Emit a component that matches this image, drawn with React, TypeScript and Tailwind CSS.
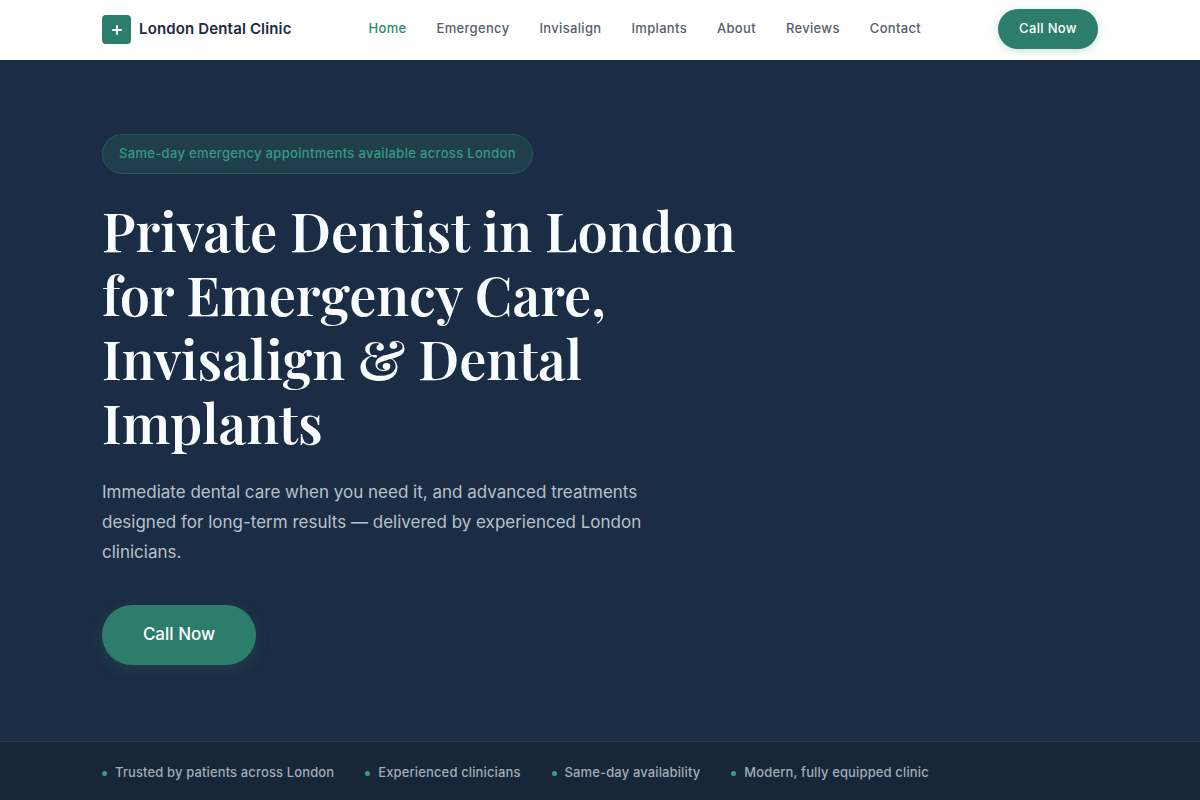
import clsx from 'clsx'

const navItems = ['Home', 'Emergency', 'Invisalign', 'Implants', 'About', 'Reviews', 'Contact']

const trustItems = [
  'Trusted by patients across London',
  'Experienced clinicians',
  'Same-day availability',
  'Modern, fully equipped clinic',
]

function Header() {
  return (
    <header className="bg-white">
      <div className="mx-auto flex h-15 w-full max-w-[996px] items-center justify-between pb-[2px]">
        <a href="#home" className="flex items-center gap-2">
          <span className="flex h-[29px] w-[29px] items-center justify-center rounded bg-[#2d7d6d]">
            <svg viewBox="0 0 12 12" className="mt-[2px] h-3 w-3" aria-hidden="true">
              <path d="M6 1.2v9.6M1.2 6h9.6" stroke="#fff" strokeWidth="1.9" />
            </svg>
          </span>
          <span className="text-[15px] font-semibold tracking-[0.01em] text-[#1b2b41]">London Dental Clinic</span>
        </a>
        <nav className="flex items-center gap-[30px]">
          {navItems.map((item, i) => (
            <a
              key={item}
              href={`#${item.toLowerCase()}`}
              className={clsx('text-[13px] font-medium tracking-wide', i === 0 ? 'text-[#2d8a6d]' : 'text-[#56606c]')}
            >
              {item}
            </a>
          ))}
        </nav>
        <button
          type="button"
          className="h-10 w-[100px] rounded-full bg-[#2d7d6d] text-[13px] font-medium tracking-wide text-white shadow-[0_2px_8px_rgba(45,125,109,0.25)]"
        >
          Call Now
        </button>
      </div>
    </header>
  )
}

function Hero() {
  return (
    <section className="flex-1 pt-[74px] pb-[76px]">
      <div className="mx-auto flex w-full max-w-[996px] flex-col items-start">
        <p className="flex h-10 items-center rounded-full border border-[#285759] bg-[#203f4d] px-4 text-[13px] font-medium tracking-wide text-[#389883]">
          Same-day emergency appointments available across London
        </p>
        <h1 className="mt-6 max-w-[680px] font-['Playfair_Display','Liberation_Serif',serif] text-[54px] leading-[64px] font-semibold text-[#fafdff]">
          Private Dentist in London for Emergency Care, Invisalign &amp; Dental Implants
        </h1>
        <p className="mt-[23px] max-w-[570px] text-[17px] leading-[30px] text-[#b7c1cb]">
          Immediate dental care when you need it, and advanced treatments designed for long-term results — delivered by
          experienced London clinicians.
        </p>
        <button
          type="button"
          className="mt-[38px] h-15 w-[154px] rounded-full bg-[#2d7d6d] text-[17px] font-medium text-white shadow-[0_4px_14px_rgba(45,125,109,0.25)]"
        >
          Call Now
        </button>
      </div>
    </section>
  )
}

function TrustBar() {
  return (
    <footer className="border-t border-[#2a394c] bg-[#172639]">
      <ul className="mx-auto flex h-[58px] w-full max-w-[996px] items-center gap-[31px] pt-1">
        {trustItems.map((item) => (
          <li key={item} className="flex items-center gap-2 text-[13px] font-medium tracking-[0.01em] text-[#a3abb5]">
            <span className="h-[5px] w-[5px] rounded-full bg-[#399b89]" />
            {item}
          </li>
        ))}
      </ul>
    </footer>
  )
}

export default function App() {
  return (
    <div className="flex min-h-screen flex-col bg-[#1b2d44] font-['Inter',sans-serif]">
      <Header />
      <Hero />
      <TrustBar />
    </div>
  )
}
